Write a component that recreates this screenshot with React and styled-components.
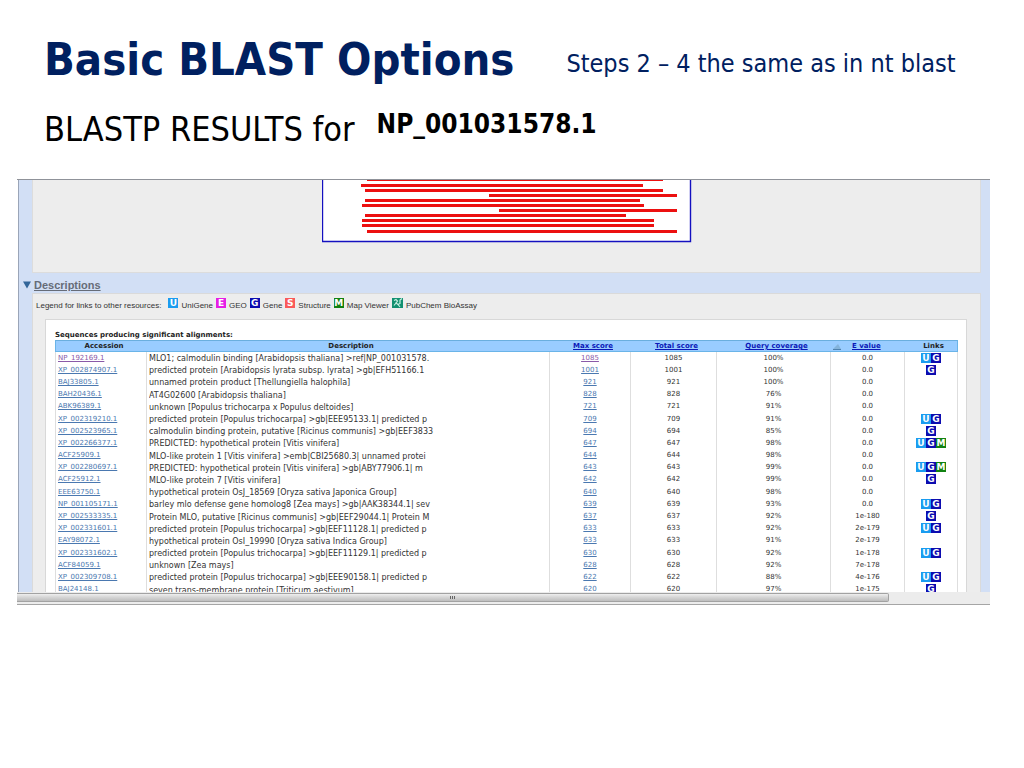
import React from "react";
import styled, { createGlobalStyle } from "styled-components";

const GlobalStyle = createGlobalStyle`
  * { box-sizing: border-box; }
  body { margin: 0; background: #fff; }
`;

const slideFont = `"DejaVu Sans Condensed", "DejaVu Sans", sans-serif`;
const tableFont = `"DejaVu Sans", sans-serif`;
const uiFont = `"Liberation Sans", Arial, sans-serif`;

const Slide = styled.main`
  min-height: 100vh;
  padding-top: 32px;
  font-family: ${slideFont};
`;

const TitleRow = styled.header`
  display: flex;
  align-items: flex-start;
  gap: 52px;
  padding-left: 44px;
  color: #002060;
`;

const Title = styled.h1`
  margin: 0;
  font-size: 45px;
  line-height: 56px;
  font-weight: bold;
  white-space: nowrap;
`;

const Note = styled.p`
  margin: 0;
  padding-top: 16px;
  font-size: 25px;
  line-height: 32px;
  white-space: nowrap;
`;

const SubtitleRow = styled.div`
  display: flex;
  align-items: flex-start;
  gap: 22px;
  padding: 20px 0 0 44px;
  color: #000;
`;

const Subtitle = styled.h2`
  margin: 0;
  font-size: 34px;
  line-height: 42px;
  font-weight: normal;
  white-space: nowrap;
`;

const QueryId = styled.strong`
  font-size: 26px;
  line-height: 32px;
`;

const Frame = styled.section`
  margin: 29px 34px 0 17px;
  border-top: 1px solid #8f9299;
`;

const Viewport = styled.div`
  height: 412px;
  overflow: hidden;
  margin-left: 1px;
  padding: 0 9px 0 13px;
  border-left: 1px solid #9aa5b8;
  background: #d2dff5;
`;

const GraphPanel = styled.div`
  display: flex;
  justify-content: center;
  height: 93px;
  background: #ededed;
  border: 1px solid #dcdcdc;
  border-top: 0;
`;

const Chart = styled.svg`
  display: block;
`;

const SectionHeading = styled.h3`
  display: flex;
  align-items: center;
  gap: 3px;
  margin: 4px 0 0 -9px;
  font: bold 11px/16px ${uiFont};
`;

const SectionLink = styled.a`
  color: #666c78;
`;

const ResultsPanel = styled.div`
  padding: 4px 13px 0 12px;
  background: #ededed;
  border: 1px solid #dadada;
`;

const Legend = styled.div`
  display: flex;
  align-items: flex-start;
  gap: 3px;
  height: 14px;
  margin-left: -9px;
  font: 8px/16px ${uiFont};
  color: #333;
  white-space: nowrap;
`;

const LegendTitle = styled.span`
  padding-right: 4px;
`;

const Badge = styled.span`
  display: inline-block;
  flex: none;
  width: 10px;
  height: 10px;
  background: ${(p) => p.$color};
  color: #fff;
  font: bold 9px/10px ${tableFont};
  text-align: center;
  text-decoration: none;
`;

const ResultsCard = styled.div`
  margin-top: 7px;
  padding: 10px 8px 0 9px;
  background: #fff;
  border: 1px solid #d8d8d8;
`;

const Table = styled.table`
  width: 100%;
  height: 256px;
  border-collapse: separate;
  border-spacing: 0;
  table-layout: fixed;
  font: 7px/11px ${tableFont};
  color: #333;
`;

const Caption = styled.caption`
  text-align: left;
  font-weight: bold;
  line-height: 10px;
  color: #222;
`;

const Col = styled.col`
  width: ${(p) => (p.$width ? `${p.$width}px` : "auto")};
`;

const HeadCell = styled.th`
  height: 12px;
  padding: 0 0 0 5px;
  background: #99ccff;
  border-top: 1px solid #6aaede;
  border-bottom: 1px solid #6ab4e8;
  font-weight: bold;
  line-height: 10px;
  color: #222;
  white-space: nowrap;

  &:first-child { border-left: 1px solid #6ab4e8; }
  &:last-child { border-right: 1px solid #6ab4e8; }
`;

const SortLink = styled.a`
  color: #0b18b8;
`;

const SortHead = styled.span`
  display: flex;
  align-items: center;
  gap: 10px;
  margin-left: -4px;
`;

const Cell = styled.td`
  height: 12px;
  padding: 0;
  border-right: 1px solid #dedede;
  text-align: center;
  vertical-align: middle;

  &:first-child {
    padding-left: 2px;
    border-left: 1px solid #dedede;
    text-align: left;
  }
`;

const DescriptionCell = styled(Cell)`
  padding: 1px 0 0 2px;
  text-align: left;
`;

const Description = styled.div`
  width: 292px;
  overflow: hidden;
  font-size: 8px;
  line-height: 11px;
  white-space: nowrap;
`;

const ResultLink = styled.a`
  color: ${(p) => (p.$visited ? "#8a5aa8" : "#4a78b0")};
`;

const BadgeGroup = styled.div`
  display: flex;
  justify-content: center;
  height: 11px;
`;

const ScrollTrack = styled.div`
  height: 13px;
  padding: 1px 0;
  background: #ececec;
  border-bottom: 1px solid #a5a5a5;
`;

const ScrollThumb = styled.div`
  display: flex;
  align-items: center;
  justify-content: center;
  gap: 1px;
  width: 89.6%;
  height: 9px;
  border: 1px solid #a2a2a2;
  border-left: 0;
  border-radius: 0 2px 2px 0;
  background: linear-gradient(#eeeeee, #d6d6d6 45%, #bdbdbd);
`;

const Grip = styled.span`
  width: 1px;
  height: 3px;
  background: #666;
`;

const alignments = [
  [45, 341, 0],
  [39, 321, 4],
  [43, 341, 9],
  [167, 355, 14],
  [43, 318, 19],
  [40, 322, 24],
  [177, 355, 29],
  [43, 304, 34],
  [40, 332, 39],
  [40, 332, 44],
  [45, 355, 50],
];

const badges = {
  U: { color: "#1a9cf0", label: "UniGene" },
  E: { color: "#e61ee6", label: "GEO" },
  G: { color: "#0c0cb0", label: "Gene" },
  S: { color: "#fa5a5a", label: "Structure" },
  M: { color: "#128212", label: "Map Viewer" },
};

const rows = [
  ["NP_192169.1", "MLO1; calmodulin binding [Arabidopsis thaliana] >ref|NP_001031578.", 1085, "100%", "0.0", "UG"],
  ["XP_002874907.1", "predicted protein [Arabidopsis lyrata subsp. lyrata] >gb|EFH51166.1", 1001, "100%", "0.0", "G"],
  ["BAJ33805.1", "unnamed protein product [Thellungiella halophila]", 921, "100%", "0.0", ""],
  ["BAH20436.1", "AT4G02600 [Arabidopsis thaliana]", 828, "76%", "0.0", ""],
  ["ABK96389.1", "unknown [Populus trichocarpa x Populus deltoides]", 721, "91%", "0.0", ""],
  ["XP_002319210.1", "predicted protein [Populus trichocarpa] >gb|EEE95133.1| predicted p", 709, "91%", "0.0", "UG"],
  ["XP_002523965.1", "calmodulin binding protein, putative [Ricinus communis] >gb|EEF3833", 694, "85%", "0.0", "G"],
  ["XP_002266377.1", "PREDICTED: hypothetical protein [Vitis vinifera]", 647, "98%", "0.0", "UGM"],
  ["ACF25909.1", "MLO-like protein 1 [Vitis vinifera] >emb|CBI25680.3| unnamed protei", 644, "98%", "0.0", ""],
  ["XP_002280697.1", "PREDICTED: hypothetical protein [Vitis vinifera] >gb|ABY77906.1| m", 643, "99%", "0.0", "UGM"],
  ["ACF25912.1", "MLO-like protein 7 [Vitis vinifera]", 642, "99%", "0.0", "G"],
  ["EEE63750.1", "hypothetical protein OsJ_18569 [Oryza sativa Japonica Group]", 640, "98%", "0.0", ""],
  ["NP_001105171.1", "barley mlo defense gene homolog8 [Zea mays] >gb|AAK38344.1| sev", 639, "93%", "0.0", "UG"],
  ["XP_002533335.1", "Protein MLO, putative [Ricinus communis] >gb|EEF29044.1| Protein M", 637, "92%", "1e-180", "G"],
  ["XP_002331601.1", "predicted protein [Populus trichocarpa] >gb|EEF11128.1| predicted p", 633, "92%", "2e-179", "UG"],
  ["EAY98072.1", "hypothetical protein OsI_19990 [Oryza sativa Indica Group]", 633, "91%", "2e-179", ""],
  ["XP_002331602.1", "predicted protein [Populus trichocarpa] >gb|EEF11129.1| predicted p", 630, "92%", "1e-178", "UG"],
  ["ACF84059.1", "unknown [Zea mays]", 628, "92%", "7e-178", ""],
  ["XP_002309708.1", "predicted protein [Populus trichocarpa] >gb|EEE90158.1| predicted p", 622, "88%", "4e-176", "UG"],
  ["BAJ24148.1", "seven trans-membrane protein [Triticum aestivum]", 620, "97%", "1e-175", "G"],
];

function AlignmentChart() {
  return (
    <Chart width="370" height="63" viewBox="0 0 370 63" role="img" aria-label="Alignment hits">
      <path d="M0.5 0V61.5H368.5V0" fill="#fff" stroke="#1410c0" strokeWidth="1.4" />
      {alignments.map(([start, end, y]) => (
        <rect key={y} x={start} y={y} width={end - start} height={y === 0 ? 1 : 3} fill="#ec1010" />
      ))}
    </Chart>
  );
}

function PubChemIcon() {
  return (
    <svg width="11" height="10" viewBox="0 0 11 10" aria-hidden="true">
      <rect width="11" height="10" fill="#129070" />
      <path d="M2 2.5L4 1.5L5.5 3L4 5L6 6.5L8 5.5V2L10 .5M4 5L2 7.5M6 6.5L8 9" fill="none" stroke="#c9f0e2" strokeWidth="1.2" />
    </svg>
  );
}

export default function App() {
  return (
    <Slide>
      <GlobalStyle />
      <TitleRow>
        <Title>Basic BLAST Options</Title>
        <Note>Steps 2 – 4 the same as in nt blast</Note>
      </TitleRow>
      <SubtitleRow>
        <Subtitle>BLASTP RESULTS for</Subtitle>
        <QueryId>NP_001031578.1</QueryId>
      </SubtitleRow>

      <Frame>
        <Viewport>
          <GraphPanel>
            <AlignmentChart />
          </GraphPanel>
          <SectionHeading>
            <svg width="8" height="8" viewBox="0 0 8 8" aria-hidden="true">
              <path d="M0 0.5H8L4 7.5Z" fill="#336699" />
            </svg>
            <SectionLink href="#descriptions">Descriptions</SectionLink>
          </SectionHeading>
          <ResultsPanel id="descriptions">
            <Legend>
              <LegendTitle>Legend for links to other resources:</LegendTitle>
              {Object.entries(badges).map(([letter, { color, label }]) => (
                <React.Fragment key={letter}>
                  <Badge $color={color}>{letter}</Badge>
                  <span>{label}</span>
                </React.Fragment>
              ))}
              <PubChemIcon />
              <span>PubChem BioAssay</span>
            </Legend>
            <ResultsCard>
              <Table>
                <Caption>Sequences producing significant alignments:</Caption>
                <colgroup>
                  <Col $width={92} />
                  <Col />
                  <Col $width={81} />
                  <Col $width={86} />
                  <Col $width={114} />
                  <Col $width={74} />
                  <Col $width={53} />
                </colgroup>
                <thead>
                  <tr>
                    <HeadCell>Accession</HeadCell>
                    <HeadCell>Description</HeadCell>
                    <HeadCell><SortLink href="#max">Max score</SortLink></HeadCell>
                    <HeadCell><SortLink href="#total">Total score</SortLink></HeadCell>
                    <HeadCell><SortLink href="#coverage">Query coverage</SortLink></HeadCell>
                    <HeadCell>
                      <SortHead>
                        <svg width="10" height="7" viewBox="0 0 10 7" aria-hidden="true">
                          <path d="M1 6L6 1L9 6Z" fill="#84b4dc" />
                          <path d="M1 6.5H9" stroke="#4f82b0" strokeWidth="1" />
                        </svg>
                        <SortLink href="#evalue">E value</SortLink>
                      </SortHead>
                    </HeadCell>
                    <HeadCell>Links</HeadCell>
                  </tr>
                </thead>
                <tbody>
                  {rows.map(([id, text, score, coverage, evalue, links], i) => (
                    <tr key={id}>
                      <Cell><ResultLink href={`#${id}`} $visited={i === 0}>{id}</ResultLink></Cell>
                      <DescriptionCell><Description>{text}</Description></DescriptionCell>
                      <Cell><ResultLink href={`#aln-${id}`} $visited={i === 0}>{score}</ResultLink></Cell>
                      <Cell>{score}</Cell>
                      <Cell>{coverage}</Cell>
                      <Cell>{evalue}</Cell>
                      <Cell>
                        <BadgeGroup>
                          {links.split("").map((letter) => (
                            <Badge key={letter} as="a" href={`#${badges[letter].label}`} $color={badges[letter].color}>
                              {letter}
                            </Badge>
                          ))}
                        </BadgeGroup>
                      </Cell>
                    </tr>
                  ))}
                </tbody>
              </Table>
            </ResultsCard>
          </ResultsPanel>
        </Viewport>
        <ScrollTrack>
          <ScrollThumb>
            <Grip />
            <Grip />
            <Grip />
          </ScrollThumb>
        </ScrollTrack>
      </Frame>
    </Slide>
  );
}
